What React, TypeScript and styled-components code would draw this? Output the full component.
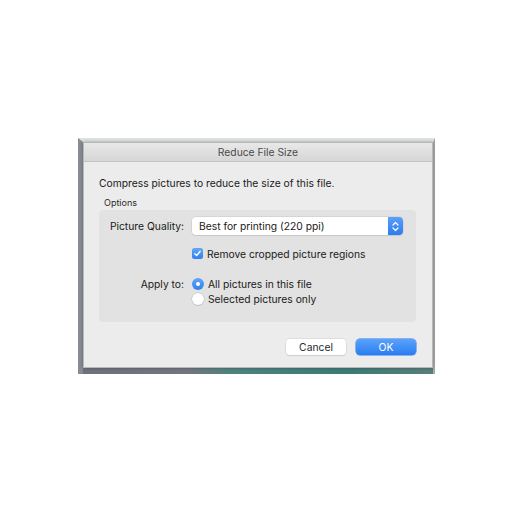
import React, { useState } from "react";
import styled, { createGlobalStyle } from "styled-components";

const GlobalStyle = createGlobalStyle`
  html, body {
    margin: 0;
    padding: 0;
    background: #ffffff;
  }
  body {
    font-family: Inter, "Liberation Sans", Arial, sans-serif;
    -webkit-font-smoothing: antialiased;
  }
`;

const Page = styled.div`
  width: 512px;
  height: 512px;
  padding: 138px 0 0 78px;
  box-sizing: border-box;
`;

// the bit of desktop around the dialog in the screenshot
const ScreenFrame = styled.div`
  width: 357px;
  height: 236px;
  box-sizing: border-box;
  border-top: 4px solid #dde2e1;
  border-left: 5px solid #878b95;
  border-right: 2px solid #a7a8ad;
  padding-bottom: 6px;
  background: linear-gradient(
    90deg,
    #6f7079 0%,
    #727580 30%,
    #4f827d 42%,
    #3c7b75 75%,
    #5a7e79 100%
  );
  display: flex;
`;

const Dialog = styled.div`
  flex: 1;
  display: flex;
  flex-direction: column;
  background: #ececec;
  border: 1px solid #b8b8b8;
  box-shadow: 0 0 3px rgba(0, 0, 0, 0.3);
`;

const TitleBar = styled.div`
  height: 18px;
  display: flex;
  align-items: center;
  justify-content: center;
  background: linear-gradient(#e8e8e8, #d6d6d6);
  border-bottom: 1px solid #c4c4c4;
  color: #4a4a4a;
  font-size: 10.3px;
`;

const Body = styled.div`
  flex: 1;
  display: flex;
  flex-direction: column;
  padding: 14px 16px 0 15px;
`;

const Lead = styled.div`
  font-size: 10.3px;
  line-height: 14px;
  color: #1a1a1a;
`;

const GroupTitle = styled.div`
  font-size: 9px;
  line-height: 12px;
  color: #2a2a2a;
  margin: 7px 0 1px 5px;
`;

const GroupBox = styled.div`
  height: 112px;
  box-sizing: border-box;
  background: #e2e2e2;
  border-radius: 4px;
  padding: 7px 13px 0 0;
  display: grid;
  grid-template-columns: 85px 1fr;
  column-gap: 8px;
  align-content: start;
`;

const FieldLabel = styled.div<{ $top?: number }>`
  font-size: 10.3px;
  color: #1a1a1a;
  text-align: right;
  padding-top: ${(p) => p.$top ?? 0}px;
  line-height: 14px;
`;

const Cell = styled.div<{ $top?: number }>`
  display: flex;
  flex-direction: column;
  padding-top: ${(p) => p.$top ?? 0}px;
`;

const Select = styled.div`
  height: 18px;
  display: flex;
  align-items: stretch;
  background: #ffffff;
  border-radius: 4px;
  box-shadow: 0 0 0 0.5px #c8c8c8, 0 1px 1px rgba(0, 0, 0, 0.12);
  overflow: hidden;
`;

const SelectText = styled.div`
  flex: 1;
  display: flex;
  align-items: center;
  padding-left: 7px;
  font-size: 10.3px;
  color: #1a1a1a;
`;

const Stepper = styled.div`
  width: 15px;
  display: flex;
  align-items: center;
  justify-content: center;
  background: linear-gradient(#5ba0f8, #2b7cf0);
`;

const Option = styled.label`
  display: flex;
  align-items: center;
  gap: 4px;
  height: 15px;
  font-size: 10.3px;
  color: #1a1a1a;
  cursor: default;
`;

const CheckBox = styled.span<{ $on: boolean }>`
  width: 11px;
  height: 11px;
  box-sizing: border-box;
  border-radius: 2.5px;
  display: flex;
  align-items: center;
  justify-content: center;
  background: ${(p) => (p.$on ? "linear-gradient(#62a6f9, #2f80f0)" : "#fff")};
  border: ${(p) => (p.$on ? "none" : "0.5px solid #b5b5b5")};
`;

const Radio = styled.span<{ $on: boolean }>`
  width: 12px;
  height: 12px;
  box-sizing: border-box;
  border-radius: 50%;
  display: flex;
  align-items: center;
  justify-content: center;
  background: ${(p) => (p.$on ? "linear-gradient(#62a6f9, #2f80f0)" : "#fff")};
  box-shadow: ${(p) =>
    p.$on ? "none" : "0 0 0 0.5px #b8b8b8, 0 1px 1px rgba(0,0,0,0.1)"};
  &::after {
    content: "";
    width: 4px;
    height: 4px;
    border-radius: 50%;
    background: #fff;
    display: ${(p) => (p.$on ? "block" : "none")};
  }
`;

const Footer = styled.div`
  display: flex;
  justify-content: flex-end;
  gap: 10px;
  padding-top: 17px;
`;

const Button = styled.button<{ $primary?: boolean }>`
  width: 60px;
  height: 16px;
  padding: 0;
  border: none;
  border-radius: 4px;
  font-family: inherit;
  font-size: 10.3px;
  color: ${(p) => (p.$primary ? "#ffffff" : "#2a2a2a")};
  background: ${(p) =>
    p.$primary ? "linear-gradient(#5aa2fa, #2a7df2)" : "#ffffff"};
  box-shadow: ${(p) =>
    p.$primary
      ? "0 0 0 0.5px #2a78e6"
      : "0 0 0 0.5px #cfcfcf, 0 1px 1px rgba(0,0,0,0.12)"};
`;

const ReduceFileSize: React.FC = () => {
  const [removeCropped, setRemoveCropped] = useState(true);
  const [applyTo, setApplyTo] = useState<"all" | "selected">("all");

  return (
    <Page>
      <GlobalStyle />
      <ScreenFrame>
        <Dialog>
          <TitleBar>Reduce File Size</TitleBar>
          <Body>
            <Lead>Compress pictures to reduce the size of this file.</Lead>
            <GroupTitle>Options</GroupTitle>
            <GroupBox>
              <FieldLabel $top={2}>Picture Quality:</FieldLabel>
              <Select>
                <SelectText>Best for printing (220 ppi)</SelectText>
                <Stepper>
                  <svg width="7" height="11" viewBox="0 0 7 11">
                    <path
                      d="M1 4 L3.5 1.5 L6 4 M1 7 L3.5 9.5 L6 7"
                      fill="none"
                      stroke="#fff"
                      strokeWidth="1.2"
                      strokeLinecap="round"
                      strokeLinejoin="round"
                    />
                  </svg>
                </Stepper>
              </Select>

              <div />
              <Cell $top={11}>
                <Option onClick={() => setRemoveCropped(!removeCropped)}>
                  <CheckBox $on={removeCropped}>
                    {removeCropped && (
                      <svg width="9" height="9" viewBox="0 0 9 9">
                        <path
                          d="M1.8 4.8 L3.6 6.6 L7.2 2.2"
                          fill="none"
                          stroke="#fff"
                          strokeWidth="1.4"
                          strokeLinecap="round"
                          strokeLinejoin="round"
                        />
                      </svg>
                    )}
                  </CheckBox>
                  Remove cropped picture regions
                </Option>
              </Cell>

              <FieldLabel $top={16}>Apply to:</FieldLabel>
              <Cell $top={15}>
                <Option onClick={() => setApplyTo("all")}>
                  <Radio $on={applyTo === "all"} />
                  All pictures in this file
                </Option>
                <Option onClick={() => setApplyTo("selected")}>
                  <Radio $on={applyTo === "selected"} />
                  Selected pictures only
                </Option>
              </Cell>
            </GroupBox>
            <Footer>
              <Button>Cancel</Button>
              <Button $primary>OK</Button>
            </Footer>
          </Body>
        </Dialog>
      </ScreenFrame>
    </Page>
  );
};

export default ReduceFileSize;
